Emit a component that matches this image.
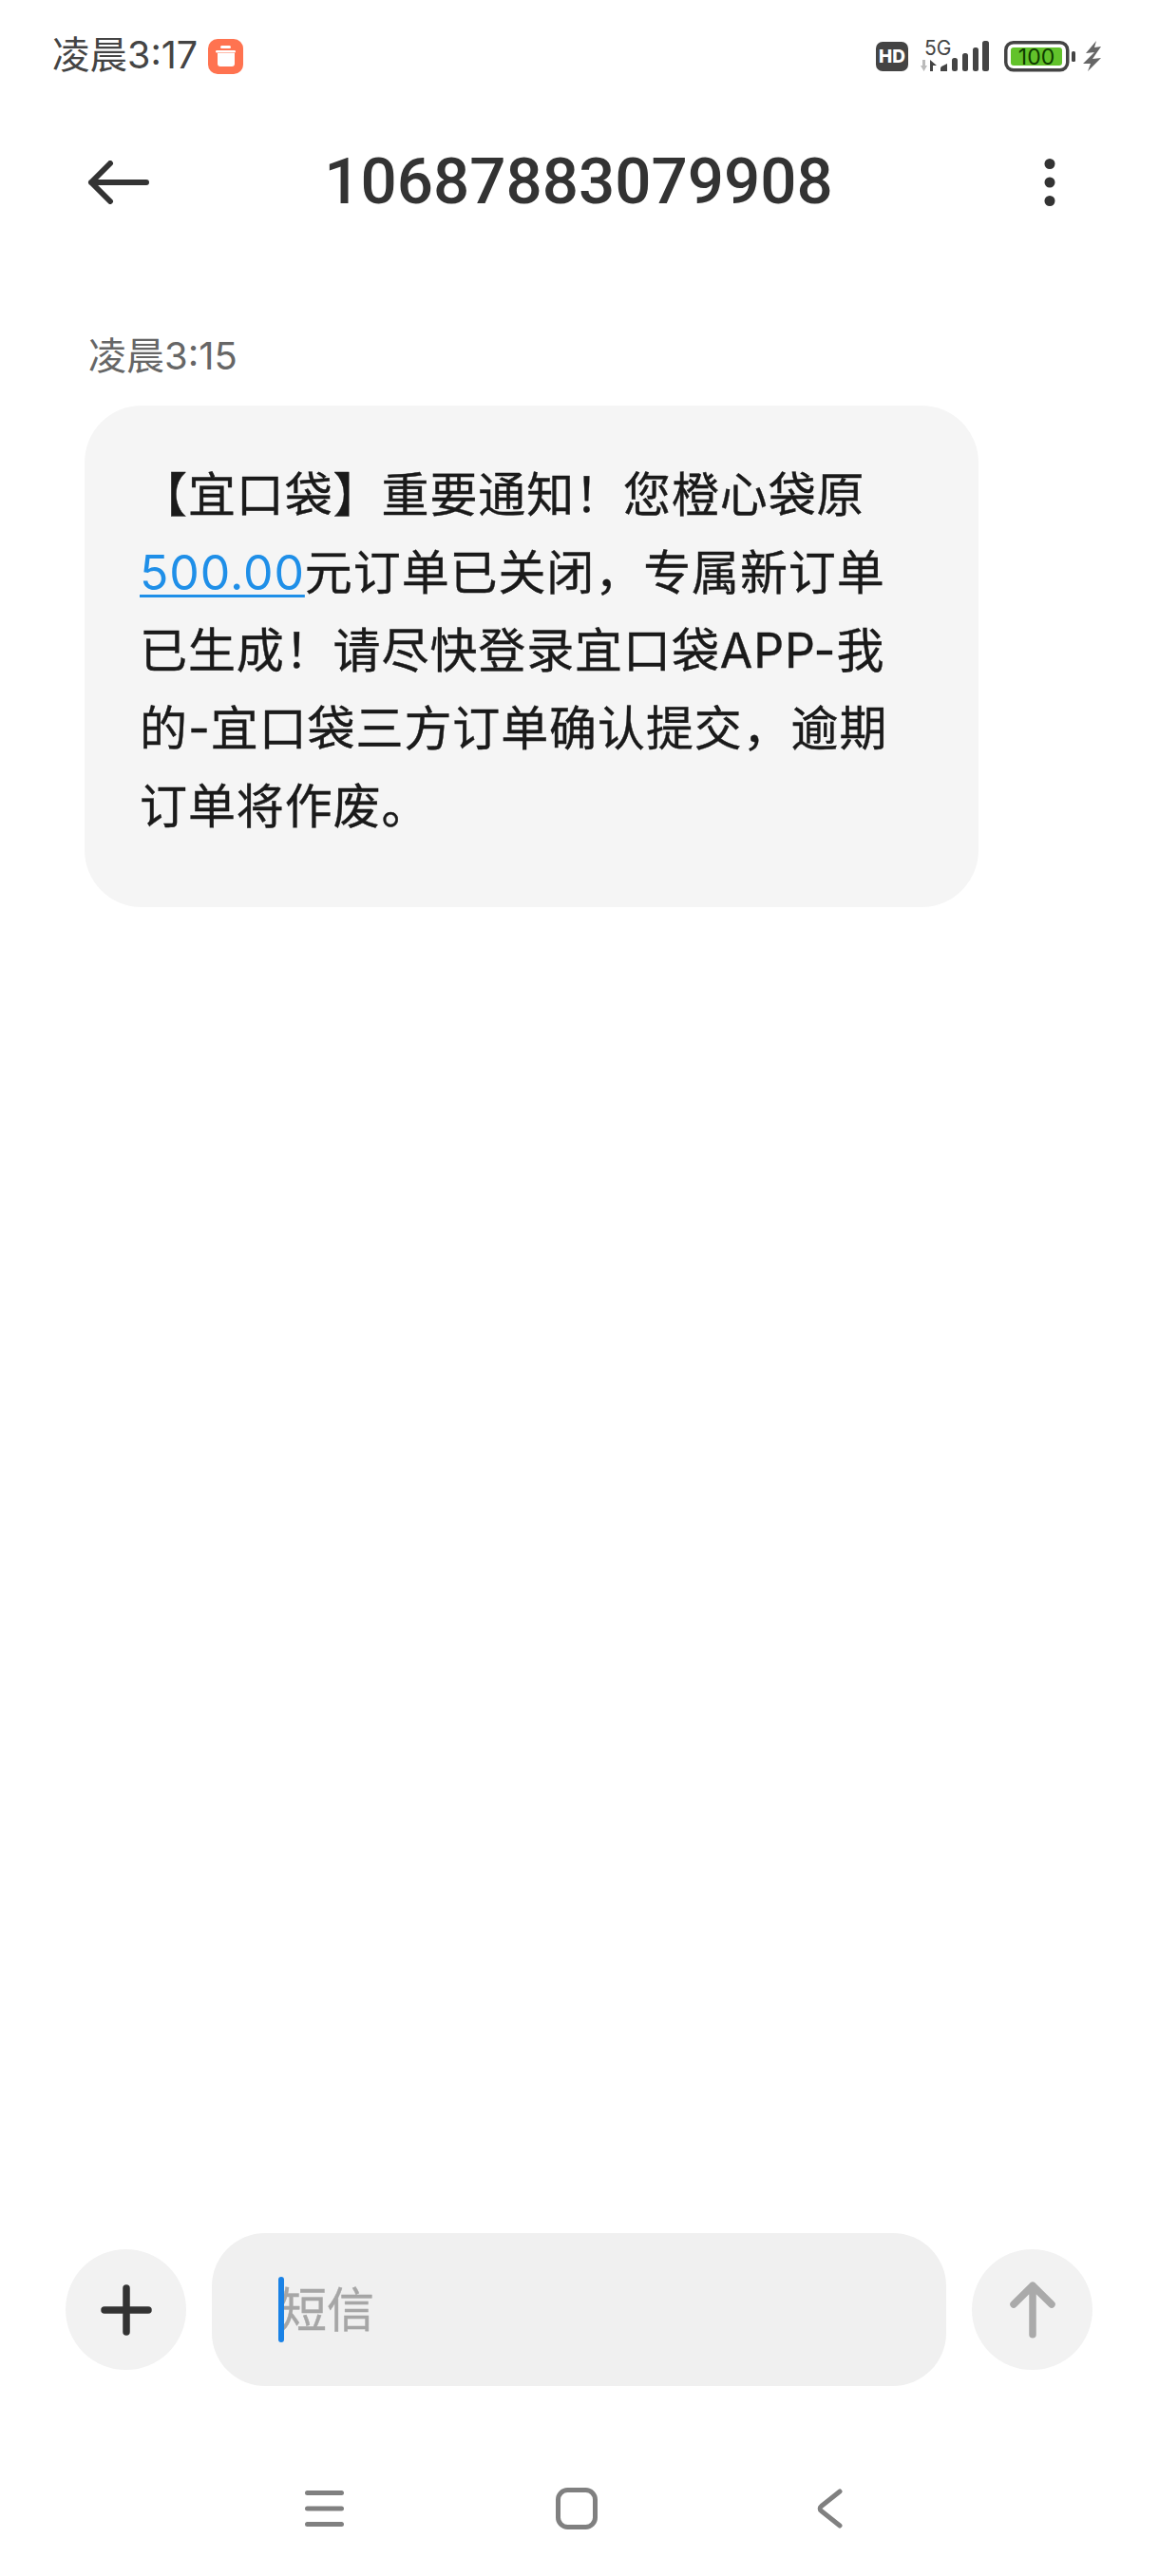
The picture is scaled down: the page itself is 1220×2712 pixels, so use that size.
<script>
  const lines = [
    '元订单已关闭，专属新订单',
    '已生成！请尽快登录宜口袋APP-我',
    '的-宜口袋三方订单确认提交，逾期',
    '订单将作废。'
  ];
</script>

<div class="page" lang="zh-CN">
  <div class="status">
    <div class="status-left">
      <span class="clock">凌晨3:17</span>
      <svg class="trash" viewBox="0 0 37 37" width="37" height="37" aria-hidden="true">
        <rect width="37" height="37" rx="10" fill="#ff7350" />
        <path d="M10 15h18v11a3 3 0 0 1-3 3H13a3 3 0 0 1-3-3z" fill="#fff" />
        <rect x="8" y="12" width="21" height="2.500" rx="1.200" fill="#fff" />
        <rect x="13" y="7" width="11" height="3" rx="1.500" fill="#fff" />
      </svg>
    </div>
    <div class="status-right">
      <svg class="hd" viewBox="0 0 34 31" width="34" height="31" aria-hidden="true">
        <rect width="34" height="31" rx="7" fill="#444" />
        <text x="17" y="21.500" text-anchor="middle" class="hd-text">HD</text>
      </svg>
      <svg class="signal" viewBox="0 0 74 38" width="74" height="38" aria-hidden="true">
        <text x="5" y="18" class="fiveg">5G</text>
        <path d="M3 23h3v6h2l-3.500 6-3.500-6h2z" fill="#bbb" />
        <path d="M11 35V23l7 6h-4v6z" fill="#444" />
        <path d="M22 35v-3q0-1 1-2l6-3v8z" fill="#444" />
        <rect x="34" y="21" width="6" height="14" rx="2.500" fill="#444" />
        <rect x="45" y="16" width="6" height="19" rx="2.500" fill="#444" />
        <rect x="56" y="10" width="6" height="25" rx="2.500" fill="#444" />
        <rect x="66" y="3" width="7" height="32" rx="2.500" fill="#444" />
      </svg>
      <svg class="battery" viewBox="0 0 76 33" width="76" height="33" aria-hidden="true">
        <rect x="1.750" y="1.750" width="65" height="29" rx="8" fill="none" stroke="#444" stroke-width="3.500" />
        <rect x="7" y="7" width="54" height="19" rx="3" fill="#62c22b" />
        <text x="34" y="25" text-anchor="middle" class="batt-text">100</text>
        <rect x="71" y="11" width="4" height="11" rx="1.500" fill="#444" />
      </svg>
      <svg class="bolt" viewBox="0 0 20 34" width="20" height="34" aria-hidden="true">
        <path d="M14 1 3 14l9-1L0 25l8 0-3 8 14-14-9 1 9-13-7 1z" fill="#666" />
      </svg>
    </div>
  </div>

  <header class="header">
    <svg class="back" viewBox="0 0 66 46" width="66" height="46" aria-hidden="true">
      <path d="M24 3 4 23l20 20M4 23h58" fill="none" stroke="#333" stroke-width="6" stroke-linecap="round" stroke-linejoin="round" />
    </svg>
    <h1 class="title">10687883079908</h1>
    <svg class="dots" viewBox="0 0 12 52" width="12" height="52" aria-hidden="true">
      <circle cx="6" cy="6.500" r="5.500" fill="#333" />
      <circle cx="6" cy="26" r="5.500" fill="#333" />
      <circle cx="6" cy="45.500" r="5.500" fill="#333" />
    </svg>
  </header>

  <div class="stamp">凌晨3:15</div>

  <div class="bubble">
    <div class="line">【宜口袋】重要通知！您橙心袋原</div>
    <div class="line"><span class="link">500.00</span>{lines[0]}</div>
    <div class="line">{lines[1]}</div>
    <div class="line">{lines[2]}</div>
    <div class="line">{lines[3]}</div>
  </div>

  <div class="composer">
    <div class="round">
      <svg viewBox="0 0 60 60" width="60" height="60" aria-hidden="true">
        <path d="M30 7v46M7 30h46" fill="none" stroke="#333" stroke-width="7.500" stroke-linecap="round" />
      </svg>
    </div>
    <div class="input">
      <span class="caret"></span>
      <span class="placeholder">短信</span>
    </div>
    <div class="round">
      <svg viewBox="0 0 60 70" width="60" height="70" aria-hidden="true">
        <path d="M30 60.750V9.250M10 29 30 9.250 50 29" fill="none" stroke="#aaa" stroke-width="7.500" stroke-linecap="round" stroke-linejoin="round" />
      </svg>
    </div>
  </div>

  <nav class="nav">
    <svg viewBox="0 0 41 44" width="41" height="44" aria-hidden="true">
      <path d="M2.500 5.500h36M2.500 22h36M2.500 38.500h36" fill="none" stroke="#808080" stroke-width="5" stroke-linecap="round" />
    </svg>
    <svg viewBox="0 0 44 44" width="44" height="44" aria-hidden="true">
      <rect x="2.500" y="2.500" width="39" height="39" rx="10" fill="none" stroke="#808080" stroke-width="5" />
    </svg>
    <svg viewBox="0 0 35 44" width="35" height="44" aria-hidden="true">
      <path d="M32 4 12.500 19.500a3 3 0 0 0 0 5L32 40" fill="none" stroke="#808080" stroke-width="5" stroke-linecap="round" stroke-linejoin="round" />
    </svg>
  </nav>
</div>

<style>
  :global(body) {
    margin: 0;
    background: #fff;
  }

  .page {
    width: 1220px;
    height: 2712px;
    display: flex;
    flex-direction: column;
    background: #fff;
    font-family: "Inter", "Noto Sans CJK SC", sans-serif;
    overflow: hidden;
  }

  .status {
    height: 118px;
    display: flex;
    align-items: center;
    justify-content: space-between;
    padding: 0 60px 0 55px;
  }

  .status-left {
    display: flex;
    align-items: center;
    gap: 11px;
  }

  .clock {
    font-size: 39.500px;
    line-height: 1;
    color: #444;
  }

  .status-right {
    display: flex;
    align-items: center;
    gap: 12px;
  }

  .signal {
    overflow: visible;
  }

  .battery {
    margin-left: 3px;
  }

  .bolt {
    margin-left: -5px;
  }

  .hd-text {
    font: 800 19px "Inter", sans-serif;
    fill: #fff;
  }

  .fiveg {
    font: 400 21px "Inter", sans-serif;
    fill: #444;
  }

  .batt-text {
    font: 400 23px "Inter", sans-serif;
    fill: #0e3b00;
  }

  .header {
    height: 148px;
    display: grid;
    grid-template-columns: 1fr auto 1fr;
    align-items: center;
    padding: 0 94px 0 92px;
  }

  .dots {
    justify-self: end;
    margin-right: 15px;
  }

  .title {
    margin: 0;
    font-family: "Roboto", sans-serif;
    font-size: 67.300px;
    font-weight: 500;
    line-height: 1;
    color: #333;
  }

  .stamp {
    margin: 86px 0 0 93px;
    font-size: 40px;
    line-height: 46px;
    color: #666;
  }

  .bubble {
    width: 941px;
    box-sizing: border-box;
    margin: 29px 0 0 89px;
    padding: 53px 40px 65px 58px;
    background: #f5f5f5;
    border-radius: 60px;
    font-size: 50px;
    line-height: 82px;
    letter-spacing: 0.9px;
    color: #1a1a1a;
    -webkit-text-stroke: 0.4px #1a1a1a;
  }

  .line {
    white-space: nowrap;
  }

  .link {
    color: #1f8fe8;
    -webkit-text-stroke: 0;
    text-decoration: underline;
    text-decoration-thickness: 3px;
    text-underline-offset: 5px;
  }

  .composer {
    margin-top: auto;
    display: flex;
    align-items: center;
    gap: 27px;
    padding-left: 69px;
  }

  .round {
    width: 127px;
    height: 127px;
    flex: none;
    display: flex;
    align-items: center;
    justify-content: center;
    border-radius: 50%;
    background: #f2f2f2;
  }

  .input {
    position: relative;
    width: 773px;
    height: 161px;
    flex: none;
    box-sizing: border-box;
    display: flex;
    align-items: center;
    padding-left: 71px;
    background: #f0f0f0;
    border-radius: 56px;
  }

  .placeholder {
    font-size: 50px;
    line-height: 1;
    color: #a6a6a6;
    -webkit-text-stroke: 0.4px #a6a6a6;
  }

  .caret {
    position: absolute;
    left: 70px;
    top: 46px;
    width: 6px;
    height: 69px;
    border-radius: 3px;
    background: #1a82e6;
  }

  .nav {
    height: 200px;
    box-sizing: border-box;
    padding: 107px 0 49px 321px;
    display: flex;
    align-items: center;
    gap: 223px;
  }
</style>
